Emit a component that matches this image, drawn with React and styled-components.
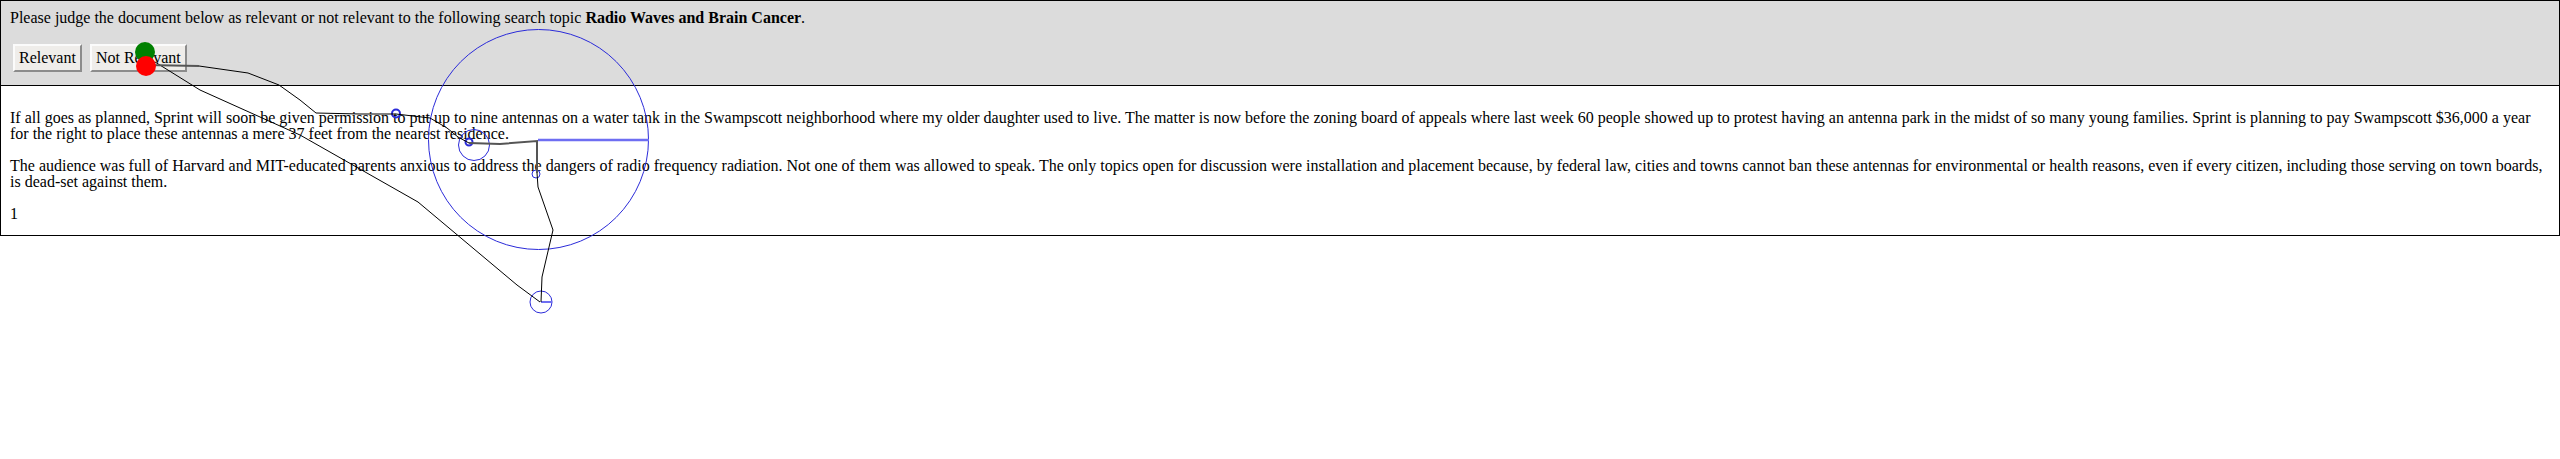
import React from "react";
import styled, { createGlobalStyle } from "styled-components";

const GlobalStyle = createGlobalStyle`
  html, body {
    margin: 0;
    padding: 0;
    background: #ffffff;
  }
  body {
    font-family: "Liberation Serif", "Times New Roman", serif;
    font-size: 16px;
    color: #000000;
  }
`;

const Page = styled.div`
  position: relative;
  width: 2560px;
  height: 459px;
`;

const Panel = styled.div`
  border: 1px solid #000000;
`;

const Header = styled.div`
  background: #dcdcdc;
  border-bottom: 1px solid #000000;
  padding: 8px 9px 13px;
`;

const Prompt = styled.div`
  line-height: 17px;
`;

const Topic = styled.b`
  font-weight: bold;
`;

const Actions = styled.div`
  display: flex;
  gap: 8px;
  margin-top: 18px;
  padding-left: 3px;
`;

const Choice = styled.button`
  font-family: "Liberation Serif", "Times New Roman", serif;
  font-size: 16px;
  line-height: 18px;
  color: #000000;
  background: #efedea;
  padding: 3px 4px;
  border-width: 2px;
  border-style: solid;
  border-color: #fbfbfb #8c8c8c #8c8c8c #fbfbfb;
  border-radius: 0;
  cursor: pointer;
`;

const Doc = styled.div`
  padding: 8px 9px 0;
  overflow: hidden;
`;

const Para = styled.p`
  margin: 16px 0;
  line-height: 16px;

  &:last-child {
    margin-bottom: 13px;
  }
`;

const Trace = styled.svg`
  position: absolute;
  top: 0;
  left: 0;
  pointer-events: none;
  overflow: visible;
`;

const BLUE = "#2b2bd9";

function MouseTrace() {
  return (
    <Trace width="2560" height="459" viewBox="0 0 2560 459">
      <circle cx="538.5" cy="139.5" r="110" fill="none" stroke={BLUE} strokeWidth="1" />
      <line x1="538" y1="140" x2="649" y2="140" stroke="#6e6ef2" strokeWidth="2.5" />
      <circle cx="474" cy="145" r="15.5" fill="none" stroke={BLUE} strokeWidth="1" />
      <circle cx="469" cy="142" r="3.5" fill="none" stroke={BLUE} strokeWidth="2" />
      <circle cx="396" cy="113.5" r="4" fill="none" stroke={BLUE} strokeWidth="2" />
      <circle cx="536" cy="174" r="4" fill="none" stroke={BLUE} strokeWidth="1" />
      <circle cx="541" cy="302" r="11" fill="none" stroke={BLUE} strokeWidth="1" />
      <line x1="541" y1="302" x2="552" y2="302" stroke="#6e6ef2" strokeWidth="2" />

      <path
        d="M155 62 L200 90 L300 135 L418 202 L517 285 L540 302"
        fill="none"
        stroke="#000000"
        strokeWidth="1"
      />
      <path d="M146 65 L199 66" fill="none" stroke="#555555" strokeWidth="2" />
      <path
        d="M199 66 L248 73 L279 85 L300 100 L316 113 L360 114 L396 114 L430 118 L447 128 L458 137 L469 143"
        fill="none"
        stroke="#000000"
        strokeWidth="1"
      />
      <path d="M469 143 L500 144 L537 141 L537 173" fill="none" stroke="#555555" strokeWidth="2" />
      <path
        d="M537 173 L538 187 L553 230 L542 277 L541 302"
        fill="none"
        stroke="#000000"
        strokeWidth="1"
      />

      <circle cx="145" cy="52" r="10" fill="#008000" />
      <circle cx="146" cy="66" r="10" fill="#ff0000" />
    </Trace>
  );
}

export default function App() {
  return (
    <>
      <GlobalStyle />
      <Page>
        <Panel>
          <Header>
            <Prompt>
              Please judge the document below as relevant or not relevant to the following search topic{" "}
              <Topic>Radio Waves and Brain Cancer</Topic>.
            </Prompt>
            <Actions>
              <Choice type="button">Relevant</Choice>
              <Choice type="button">Not Relevant</Choice>
            </Actions>
          </Header>
          <Doc>
            <Para>
              If all goes as planned, Sprint will soon be given permission to put up to nine antennas on a water
              tank in the Swampscott neighborhood where my older daughter used to live. The matter is now before
              the zoning board of appeals where last week 60 people showed up to protest having an antenna park in
              the midst of so many young families. Sprint is planning to pay Swampscott $36,000 a year for the right
              to place these antennas a mere 37 feet from the nearest residence.
            </Para>
            <Para>
              The audience was full of Harvard and MIT-educated parents anxious to address the dangers of radio
              frequency radiation. Not one of them was allowed to speak. The only topics open for discussion were
              installation and placement because, by federal law, cities and towns cannot ban these antennas for
              environmental or health reasons, even if every citizen, including those serving on town boards, is
              dead-set against them.
            </Para>
            <Para>1</Para>
          </Doc>
        </Panel>
        <MouseTrace />
      </Page>
    </>
  );
}
